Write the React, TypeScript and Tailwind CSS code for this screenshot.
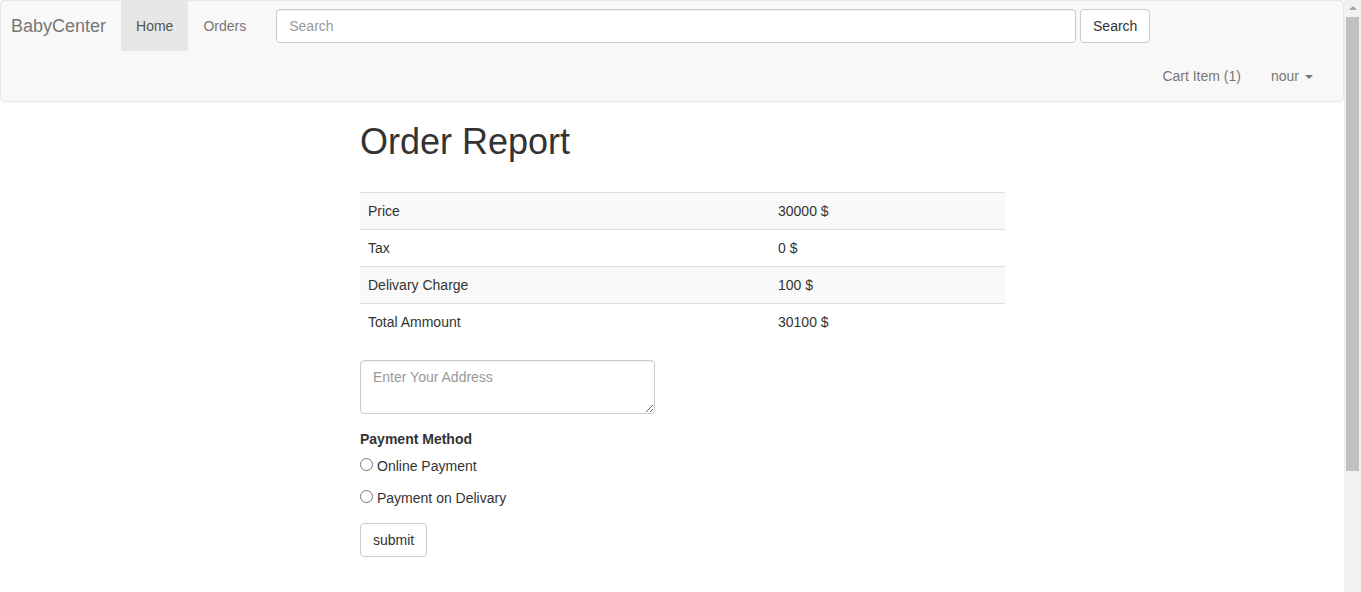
import React from "react";

const rows = [
  { label: "Price", value: "30000 $" },
  { label: "Tax", value: "0 $" },
  { label: "Delivary Charge", value: "100 $" },
  { label: "Total Ammount", value: "30100 $" },
];

function Navbar() {
  return (
    <nav className="border border-[#e7e7e7] bg-[#f8f8f8] rounded-[4px] h-[102px] flex flex-col">
      {/* top row: brand, links, search */}
      <div className="flex items-start h-[50px]">
        <a className="h-[50px] pl-[10px] pr-[15px] flex items-center text-[18px] text-[#777]">BabyCenter</a>
        <a className="h-[50px] px-[15px] flex items-center bg-[#e7e7e7] text-[#555]">Home</a>
        <a className="h-[50px] px-[15px] flex items-center text-[#777]">Orders</a>
        <form className="flex items-center mt-[8px] ml-[15px]" onSubmit={(e) => e.preventDefault()}>
          <input
            placeholder="Search"
            className="w-[800px] h-[34px] px-[12px] border border-[#ccc] rounded-[4px] bg-white text-[14px] placeholder:text-[#999] outline-none shadow-[inset_0_1px_1px_rgba(0,0,0,0.075)]"
          />
          <button className="ml-[4px] w-[70px] h-[34px] border border-[#ccc] rounded-[4px] bg-white text-[#333]">
            Search
          </button>
        </form>
      </div>

      {/* second row: right nav */}
      <div className="flex justify-end h-[50px] pr-[15px]">
        <a className="h-[50px] px-[15px] flex items-center text-[#777]">Cart Item (1)</a>
        <a className="h-[50px] px-[15px] flex items-center text-[#777]">
          nour
          <span className="ml-[6px] mt-[1px] w-0 h-0 border-x-[4px] border-x-transparent border-t-[4px] border-t-[#777]" />
        </a>
      </div>
    </nav>
  );
}

function Scrollbar() {
  return (
    <div className="w-[17px] shrink-0 bg-[#f1f1f1] flex flex-col items-center">
      <div className="h-[17px] flex items-center justify-center">
        <span className="w-0 h-0 border-x-[4px] border-x-transparent border-b-[4px] border-b-[#a3a3a3] mb-[2px]" />
      </div>
      <div className="w-[13px] h-[454px] bg-[#c1c1c1]" />
    </div>
  );
}

export default function App() {
  return (
    <div
      className="flex h-[592px] overflow-hidden bg-white text-[14px] leading-[20px] text-[#333]"
      style={{ fontFamily: '"Liberation Sans", Arial, sans-serif' }}
    >
      <div className="flex-1 min-w-0">
        <Navbar />

        <div className="ml-[360px] w-[645px]">
          <h1 className="mt-[20px] text-[36px] leading-[39.6px] font-normal">Order Report</h1>

          {/* Totals */}
          <table className="mt-[30px] w-full border-collapse">
            <tbody>
              {rows.map((r, i) => (
                <tr key={r.label} className={i % 2 === 0 ? "bg-[#f9f9f9]" : ""}>
                  <td className="w-[410px] p-[8px] border-t border-[#ddd]">{r.label}</td>
                  <td className="p-[8px] border-t border-[#ddd]">{r.value}</td>
                </tr>
              ))}
            </tbody>
          </table>

          <form className="mt-[20px]" onSubmit={(e) => e.preventDefault()}>
            <textarea
              placeholder="Enter Your Address"
              rows={2}
              className="block w-[295px] h-[54px] px-[12px] py-[6px] border border-[#ccc] rounded-[4px] text-[14px] placeholder:text-[#999] outline-none shadow-[inset_0_1px_1px_rgba(0,0,0,0.075)]"
            />

            <div className="mt-[15px] font-bold">Payment Method</div>

            <label className="mt-[7px] flex items-center">
              <input
                type="radio"
                name="pay"
                className="appearance-none w-[13px] h-[13px] m-0 mt-[-2px] rounded-full border border-[#767676] bg-white"
              />
              <span className="ml-[4px]">Online Payment</span>
            </label>
            <label className="mt-[12px] flex items-center">
              <input
                type="radio"
                name="pay"
                className="appearance-none w-[13px] h-[13px] m-0 mt-[-2px] rounded-full border border-[#767676] bg-white"
              />
              <span className="ml-[4px]">Payment on Delivary</span>
            </label>

            <button className="mt-[15px] h-[34px] px-[12px] border border-[#ccc] rounded-[4px] bg-white text-[#333]">
              submit
            </button>
          </form>
        </div>
      </div>
      <Scrollbar />
    </div>
  );
}
